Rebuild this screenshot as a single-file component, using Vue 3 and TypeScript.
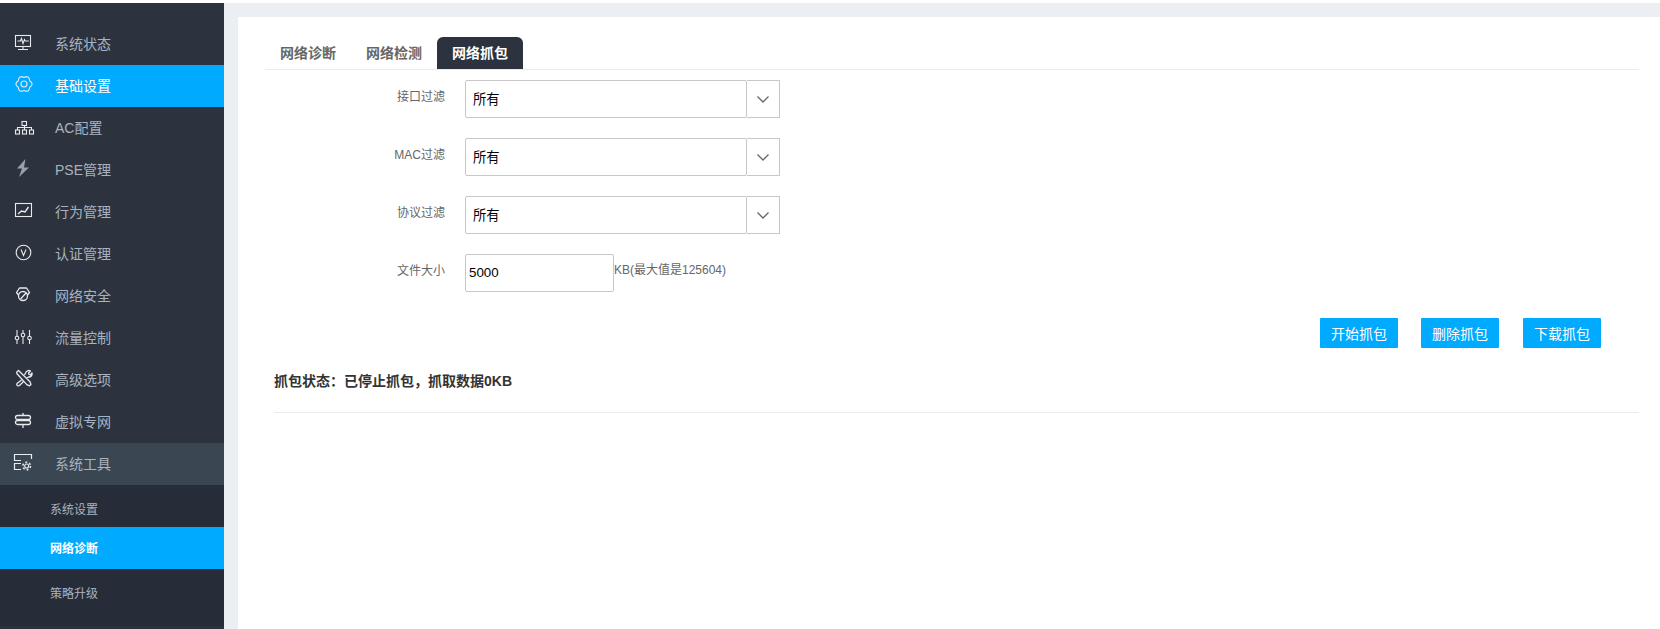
<script setup lang="ts">
const menu = [
  { key: 'status', label: '系统状态' },
  { key: 'gear', label: '基础设置', active: true },
  { key: 'tree', label: 'AC配置' },
  { key: 'bolt', label: 'PSE管理' },
  { key: 'chart', label: '行为管理' },
  { key: 'v', label: '认证管理' },
  { key: 'shield', label: '网络安全' },
  { key: 'sliders', label: '流量控制' },
  { key: 'tools', label: '高级选项' },
  { key: 'vpn', label: '虚拟专网' },
  { key: 'sys', label: '系统工具', open: true },
]
const sub = [
  { label: '系统设置' },
  { label: '网络诊断', active: true },
  { label: '策略升级' },
]
const tabs = [
  { label: '网络诊断' },
  { label: '网络检测' },
  { label: '网络抓包', active: true },
]
const selects = ['接口过滤', 'MAC过滤', '协议过滤']
const actions = ['开始抓包', '删除抓包', '下载抓包']
</script>

<template>
  <div class="page">
    <aside class="side">
      <div v-for="m in menu" :key="m.key" class="item" :class="{ active: m.active, open: m.open }">
        <svg class="ico" viewBox="0 0 20 20" fill="none" stroke="currentColor" stroke-width="1.1">
          <template v-if="m.key === 'status'">
            <rect x="1.500" y="3.500" width="15" height="11" />
            <path d="M3.500 9h3l1-2.500 1.500 5 1.500-4 .8 1.500h3.500M9 14.500v2.500M4 17.500h10" />
          </template>
          <template v-else-if="m.key === 'gear'">
            <path d="M15.700 6.700Q15.250 .9 10 3.400 4.750 .9 4.300 6.700-.5 10 4.300 13.300 4.750 19.100 10 16.600 15.250 19.100 15.700 13.300 20.500 10 15.700 6.700z" stroke-linejoin="round" />
            <circle cx="10" cy="10" r="3" />
          </template>
          <template v-else-if="m.key === 'tree'">
            <rect x="8" y="5.500" width="4.500" height="4" />
            <rect x="1.500" y="14" width="4" height="4" />
            <rect x="8.500" y="14" width="4" height="4" />
            <rect x="15.500" y="14" width="4" height="4" />
            <path d="M10.500 9.500V14M3.500 14v-2.500h14V14" />
          </template>
          <template v-else-if="m.key === 'bolt'">
            <path d="M11.500 1 3 10.500h5L5 19l10-9.500h-5z" fill="#9aa0a9" stroke="none" />
          </template>
          <template v-else-if="m.key === 'chart'">
            <rect x="1.500" y="3.500" width="16" height="13" />
            <path d="m4 14 3.500-3 3.500 1 3.500-5" stroke-width="1.400" />
          </template>
          <template v-else-if="m.key === 'v'">
            <circle cx="9.500" cy="10.500" r="7.300" />
            <path d="m7 7.500 2.500 6 2.500-6" />
          </template>
          <template v-else-if="m.key === 'shield'">
            <path d="M4.500 11 2.500 8.500 5.500 4h7l3 4.500-2 2.500" stroke-linejoin="round" stroke-width="1.300" />
            <circle cx="9" cy="12" r="4.500" stroke-width="1.300" />
            <path d="m6.500 15 5.500-6" stroke-width="1.300" />
          </template>
          <template v-else-if="m.key === 'sliders'">
            <path d="M3 4v6.500M3 14v4M9 4v3.500M9 11v7M15.500 4v6.500M15.500 14v4" />
            <circle cx="3" cy="12" r="1.800" />
            <circle cx="9" cy="9" r="1.800" />
            <circle cx="15.500" cy="12" r="1.800" />
          </template>
          <template v-else-if="m.key === 'tools'">
            <path d="M2.800 4 4.500 2.500 16 13.800l1 2.700-1.500 1.300-2.700-1.200L2.800 5.500zM10.500 7 12 4.200C13 2.500 15 2 16.500 3l-2 2 .5 1.500 1.500.5 1.500-2c.5 2-.5 4-3.500 4l-2 1.500M7.500 12 3 15.500c-1 1.500 1 3 2.500 2l4-4" stroke-width="1.300" stroke-linejoin="round" />
          </template>
          <template v-else-if="m.key === 'vpn'">
            <rect x="1.500" y="5.500" width="15" height="4" rx="2" stroke-width="1.300" />
            <rect x="1.500" y="10.500" width="15" height="4" rx="2" stroke-width="1.300" />
            <path d="M9 3v2.500M9 14.500V18" stroke-width="1.300" />
          </template>
          <template v-else>
            <path d="M17.500 7V2.500H.5v6H7M7 11.500H.5v6H7" stroke-width="1.200" />
            <circle cx="12.700" cy="14" r="2" />
            <circle cx="12.700" cy="14" r="3.800" stroke-dasharray="2 2" stroke-width="1.500" />
          </template>
        </svg>
        <span>{{ m.label }}</span>
      </div>
      <div class="subs">
        <div v-for="s in sub" :key="s.label" class="sub" :class="{ active: s.active }">{{ s.label }}</div>
      </div>
    </aside>
    <main class="main">
      <section class="card">
        <nav class="tabs">
          <div v-for="t in tabs" :key="t.label" class="tab" :class="{ active: t.active }">{{ t.label }}</div>
        </nav>
        <form class="form" @submit.prevent>
          <div v-for="s in selects" :key="s" class="row">
            <label class="lab">{{ s }}</label>
            <div class="sel">所有</div>
            <div class="caret">
              <svg width="12" height="7" viewBox="0 0 12 7" fill="none" stroke="#666" stroke-width="1.300"><path d="m.5.5 5.500 5.500 5.500-5.500" /></svg>
            </div>
          </div>
          <div class="row">
            <label class="lab">文件大小</label>
            <div class="inp">5000</div>
            <span class="unit">KB(最大值是125604)</span>
          </div>
        </form>
        <div class="actions">
          <button v-for="a in actions" :key="a" type="button" class="btn">{{ a }}</button>
        </div>
        <p class="state">抓包状态：已停止抓包，抓取数据0KB</p>
      </section>
    </main>
  </div>
</template>

<style scoped>
.page {
  display: flex;
  height: 626px;
  margin-top: 3px;
  overflow: hidden;
  font-family: "Liberation Sans", "Noto Sans CJK SC", sans-serif;
}
.side {
  width: 224px;
  flex: none;
  padding-top: 20px;
  background: #2c333e;
  box-sizing: border-box;
}
.item {
  display: flex;
  align-items: center;
  height: 42px;
  padding-left: 14px;
  padding-bottom: 2px;
  color: #a9b3c0;
  font-size: 14px;
  box-sizing: border-box;
}
.item.active {
  background: #00aaff;
  color: #fff;
}
.item.open {
  background: #3a4753;
}
.ico {
  flex: none;
  width: 20px;
  height: 20px;
  margin-right: 21px;
  margin-top: -2px;
  overflow: visible;
  color: #e8eaed;
}
.subs {
  background: #272d38;
  height: 141px;
}
.sub {
  height: 42px;
  line-height: 50px;
  padding-left: 50px;
  font-size: 12px;
  color: #a9b3c0;
}
.sub.active {
  line-height: 44px;
  background: #00aaff;
  color: #fff;
  font-weight: 700;
}
.main {
  flex: 1;
  padding: 14px 0 0 14px;
  background: #ebeef3;
}
.card {
  height: 100%;
  padding: 20px 21px 0 27px;
  background: #fff;
  box-sizing: border-box;
}
.tabs {
  display: flex;
  height: 33px;
  border-bottom: 1px solid #e9ecef;
  box-sizing: border-box;
}
.tab {
  width: 86px;
  height: 32px;
  line-height: 32px;
  text-align: center;
  font-size: 14px;
  font-weight: 700;
  color: #666;
  border-radius: 6px 6px 0 0;
}
.tab.active {
  background: #2c333e;
  color: #fff;
}
.form {
  display: flex;
  flex-direction: column;
  gap: 20px;
  margin-top: 10px;
}
.row {
  display: flex;
  align-items: flex-start;
  height: 38px;
}
.lab {
  width: 180px;
  margin-right: 20px;
  text-align: right;
  font-size: 12px;
  line-height: 34px;
  color: #666;
}
.sel {
  width: 282px;
  height: 38px;
  padding-left: 7px;
  line-height: 38px;
  font-size: 13.330px;
  color: #000;
  background: #fff;
  border: 1px solid #c7c7c7;
  border-radius: 2px;
  box-sizing: border-box;
}
.caret {
  display: flex;
  align-items: center;
  justify-content: center;
  width: 33px;
  height: 38px;
  border: 1px solid #c7c7c7;
  border-left: 0;
  box-sizing: border-box;
}
.inp {
  width: 149px;
  height: 38px;
  padding-left: 3px;
  line-height: 36px;
  font-size: 13.330px;
  color: #000;
  border: 1px solid #c7c7c7;
  border-radius: 2px;
  box-sizing: border-box;
}
.unit {
  line-height: 32px;
  font-size: 12px;
  color: #666;
}
.actions {
  display: flex;
  justify-content: flex-end;
  gap: 24px;
  margin-top: 26px;
  margin-right: 38px;
}
.btn {
  width: 78px;
  height: 30px;
  padding: 0;
  border: 0;
  border-radius: 1px;
  background: #00aaff;
  color: #fff;
  font-family: inherit;
  font-size: 14px;
}
.btn:first-child {
  margin-right: -1px;
}
.state {
  margin: 21px 0 0 9px;
  height: 43px;
  border-bottom: 1px solid #e9ecef;
  font-size: 14px;
  font-weight: 700;
  line-height: 24px;
  color: #333;
}
</style>
